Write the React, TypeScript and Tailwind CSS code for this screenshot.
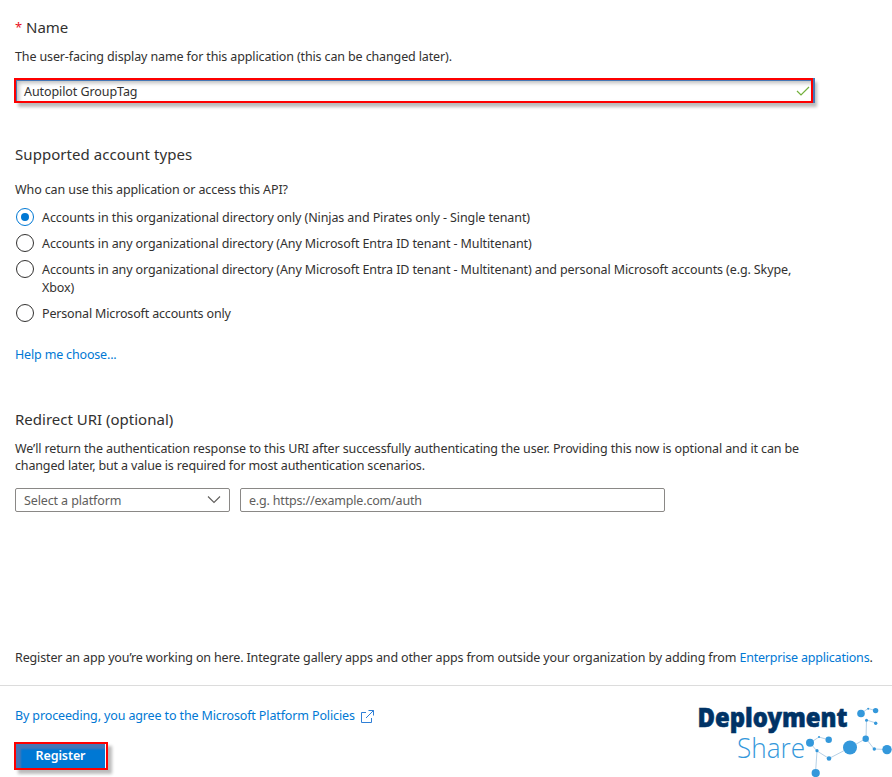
import React from "react";

type TextProps = { children: React.ReactNode; className?: string };

function Line({ children, className = "" }: TextProps) {
  return (
    <div className="h-[18px] text-[12.5px] leading-[18px]">
      <span className={`whitespace-nowrap ${className}`}>{children}</span>
    </div>
  );
}

function Heading({ children, className = "" }: TextProps) {
  return (
    <h2 className="h-5 text-[15px] leading-5">
      <span className={`whitespace-nowrap ${className}`}>{children}</span>
    </h2>
  );
}

function Option({ checked = false, children }: { checked?: boolean; children: React.ReactNode }) {
  return (
    <label className="flex items-start gap-2 pl-px">
      <span
        className={`flex size-[18px] shrink-0 items-center justify-center rounded-full border ${
          checked ? "border-[#0078d4]" : "border-[#323130]"
        }`}
      >
        {checked && <span className="size-2 rounded-full bg-[#0078d4]" />}
      </span>
      <span className="block pt-px">{children}</span>
    </label>
  );
}

function Logo() {
  return (
    <svg width="200" height="77" viewBox="692 700 200 77">
      <text x="697.500" y="727" textLength="150" lengthAdjust="spacingAndGlyphs" fontSize="26.500" fontWeight="900" fill="#003366" stroke="#003366" strokeWidth="0.600" className="font-['Noto_Sans','Open_Sans',sans-serif]">Deployment</text>
      <text x="737" y="758" textLength="68" lengthAdjust="spacingAndGlyphs" fontSize="28" fontWeight="300" fill="#3498db" className="font-['Open_Sans',sans-serif]">Share</text>
      <path
        d="M810 743L819 737L829 740M810 743L817 751L829 758.500L850 747.500L866 738.500L874 749L887 749.500M817 751L815.500 773M866 738.500L866.500 720L876 723M861 713.500L868 708.500L875.500 710.500"
        stroke="#a3c4de"
        strokeWidth="0.800"
        fill="none"
      />
      <g fill="#3498db">
        <circle cx="810" cy="742.700" r="4" />
        <circle cx="819" cy="737" r="1" />
        <circle cx="828.700" cy="739.700" r="3.200" />
        <circle cx="817" cy="750.700" r="1.600" />
        <circle cx="829" cy="758.500" r="2.300" />
        <circle cx="815.700" cy="773" r="4.100" />
        <circle cx="850" cy="747.500" r="7" />
        <circle cx="865.700" cy="738.700" r="3.200" />
        <circle cx="874.300" cy="749" r="1.700" />
        <circle cx="887" cy="749.600" r="4.700" />
        <circle cx="866.500" cy="720.300" r="1.500" />
        <circle cx="875.700" cy="723.300" r="1.700" />
        <circle cx="861" cy="713.500" r="3.800" />
        <circle cx="868.200" cy="708.700" r="1" />
        <circle cx="875.600" cy="710.600" r="2.700" />
      </g>
    </svg>
  );
}

export default function App() {
  return (
    <main className="h-[777px] w-[892px] overflow-hidden bg-white pt-[17px] font-['Noto_Sans','Open_Sans',sans-serif] text-[#323130]">
      <section className="pl-[15px]">
        <div className="flex">
          <span className="w-[11px] text-[13px] leading-5 text-[#e81123]">*</span>
          <Heading>Name</Heading>
        </div>
        <div className="pt-[11px]">
          <Line className="tracking-[-0.13px]">The user-facing display name for this application (this can be changed later).</Line>
        </div>
        <div className="-ml-px mt-[12px] flex h-[25px] w-[799px] items-center justify-between border-2 border-[#fe0000] pl-2 pr-px shadow-[2px_0_0_#4577b5,4px_4px_3px_#0004,inset_1px_1px_0_#4577b5,inset_3px_3px_4px_#0004]">
          <div className="pt-[2px]"><Line className="tracking-[-0.08px]">Autopilot GroupTag</Line></div>
          <svg width="14" height="12" viewBox="0 0 14 12" fill="none" stroke="#73b03c" strokeWidth="1.200"><path d="M1 6L5 10L13 2" /></svg>
        </div>
      </section>

      <section className="pl-[15px] pt-[41px]">
        <Heading className="tracking-[0.06px]">Supported account types</Heading>
        <div className="pt-[17px]"><Line className="tracking-[-0.11px]">Who can use this application or access this API?</Line></div>
        <div className="flex flex-col gap-[7px] pt-[9px]">
          <Option checked><Line className="tracking-[-0.1px]">Accounts in this organizational directory only (Ninjas and Pirates only - Single tenant)</Line></Option>
          <Option><Line className="tracking-[-0.107px]">Accounts in any organizational directory (Any Microsoft Entra ID tenant - Multitenant)</Line></Option>
          <Option>
            <Line className="tracking-[-0.107px]">Accounts in any organizational directory (Any Microsoft Entra ID tenant - Multitenant) and personal Microsoft accounts (e.g. Skype,</Line>
            <Line className="tracking-[-0.1px]">Xbox)</Line>
          </Option>
          <Option><Line className="tracking-[-0.16px]">Personal Microsoft accounts only</Line></Option>
        </div>
        <div className="pt-[23px] text-[#0078d4]"><Line className="tracking-[-0.17px]">Help me choose...</Line></div>
      </section>

      <section className="pl-[15px] pt-[45px]">
        <Heading>Redirect URI (optional)</Heading>
        <div className="pt-[11px]">
          <Line className="tracking-[-0.12px]">We’ll return the authentication response to this URI after successfully authenticating the user. Providing this now is optional and it can be</Line>
          <div className="-mt-px"><Line className="tracking-[-0.15px]">changed later, but a value is required for most authentication scenarios.</Line></div>
        </div>
        <div className="flex gap-[10px] pt-[13px] text-[#605e5c]">
          <div className="flex h-6 w-[215px] items-center justify-between rounded-[2px] border border-[#8a8886] px-2">
            <div className="pt-[2px]"><Line className="tracking-[-0.12px]">Select a platform</Line></div>
            <svg width="14" height="8" viewBox="0 0 14 8" fill="none" stroke="#605e5c" strokeWidth="1.100"><path d="M1 .5L7 6.500L13 .5" /></svg>
          </div>
          <div className="flex h-6 w-[425px] items-center rounded-[2px] border border-[#8a8886] pl-2">
            <div className="pt-[2px]"><Line className="tracking-[-0.18px]">e.g. https://example.com/auth</Line></div>
          </div>
        </div>
      </section>

      <div className="pl-[15px] pt-[137px]">
        <Line className="tracking-[-0.137px]">Register an app you’re working on here. Integrate gallery apps and other apps from outside your organization by adding from <span className="tracking-[-0.2px] text-[#0078d4]">Enterprise applications</span>.</Line>
      </div>

      <footer className="mt-[18px] flex justify-between border-t border-[#dcdcdc]">
        <div className="pl-[15px] pt-[21px]">
          <div className="flex gap-[6px] text-[#0078d4]">
            <Line className="tracking-[-0.13px]">By proceeding, you agree to the Microsoft Platform Policies</Line>
            <svg className="mt-[3px]" width="13" height="13" viewBox="0 0 13 13" fill="none" stroke="#2f7fd6"><path d="M5 2.500H.5V12.500H10.500V8M7.500.5H12.500V5.500M12.500.5L5 8" /></svg>
          </div>
          <button className="-ml-px mt-[17px] flex h-7 w-[94px] items-center justify-center border-2 border-[#fe0000] bg-[#0078d4] pr-px text-white shadow-[4px_4px_3px_#0004,inset_-1px_0_0_#fff,inset_5px_5px_2px_#4577b5]">
            <Line className="font-semibold tracking-[-0.1px]">Register</Line>
          </button>
        </div>
        <div className="mt-[14px] h-[77px]"><Logo /></div>
      </footer>
    </main>
  );
}
